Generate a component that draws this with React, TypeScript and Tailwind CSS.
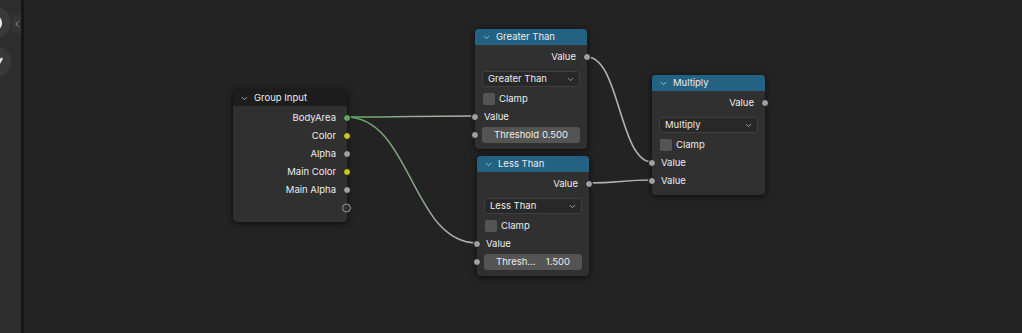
import { ChevronDown, ChevronLeft } from "lucide-react";

type Row =
  | { kind: "out"; label: string; color?: string }
  | { kind: "in"; label: string; color?: string }
  | { kind: "outEmpty" }
  | { kind: "select"; label: string }
  | { kind: "check"; label: string }
  | { kind: "field"; label: string; value: string };

interface NodeProps {
  title: string;
  x: number;
  y: number;
  w: number;
  blue?: boolean;
  rows: Row[];
}

const FONT = { fontFamily: "Inter, 'DejaVu Sans', sans-serif" };

function Socket({ color = "#a1a1a1", side }: { color?: string; side: "l" | "r" }) {
  return (
    <span
      className={`absolute top-1/2 h-[8px] w-[8px] -translate-y-1/2 rounded-full border border-[#1a1a1a] ${
        side === "l" ? "-left-[4px]" : "-right-[4px]"
      }`}
      style={{ backgroundColor: color }}
    />
  );
}

function NodeRow({ row }: { row: Row }) {
  switch (row.kind) {
    case "out":
      return (
        <div className="relative flex h-[18px] items-center justify-end pr-[11px]">
          {row.label}
          <Socket side="r" color={row.color} />
        </div>
      );
    case "outEmpty":
      return (
        <div className="relative h-[18px]">
          <span className="absolute -right-[4px] top-1/2 h-[9px] w-[9px] -translate-y-1/2 rounded-full border border-[#9a9a9a] bg-[#303030]" />
        </div>
      );
    case "in":
      return (
        <div className="relative flex h-[18px] items-center pl-[9px]">
          {row.label}
          <Socket side="l" color={row.color} />
        </div>
      );
    case "select":
      return (
        <div className="mx-[7px] mb-[3px] mt-[5px] flex h-[16px] items-center justify-between rounded-[3px] border border-[#3f3f3f] bg-[#282828] pl-[5px] pr-[4px]">
          <span>{row.label}</span>
          <ChevronDown size={9} strokeWidth={2} className="text-[#bdbdbd]" />
        </div>
      );
    case "check":
      return (
        <div className="flex h-[18px] items-center gap-[4px] pl-[8px]">
          <span className="h-[12px] w-[12px] rounded-[2px] bg-[#545454]" />
          {row.label}
        </div>
      );
    case "field":
      return (
        <div className="relative flex h-[18px] items-center px-[7px]">
          <Socket side="l" />
          <div className="flex h-[16px] flex-1 items-center justify-between rounded-[3px] bg-[#545454] px-[12px]">
            <span>{row.label}</span>
            <span>{row.value}</span>
          </div>
        </div>
      );
  }
}

function Node({ title, x, y, w, blue, rows }: NodeProps) {
  return (
    <div
      className="absolute rounded-[4px] bg-[#303030] pb-[5px] text-[9.5px] text-[#ececec] shadow-[0_1px_6px_rgba(0,0,0,0.7)]"
      style={{ left: x, top: y, width: w }}
    >
      <div
        className={`flex h-[16px] items-center gap-[5px] rounded-t-[4px] pl-[7px] ${
          blue ? "bg-[#246283]" : "bg-[#1d1d1d]"
        }`}
      >
        <ChevronDown size={9} strokeWidth={2} className="text-[#d0d0d0]" />
        <span>{title}</span>
      </div>
      <div className="pt-[3px]">
        {rows.map((r, i) => (
          <NodeRow key={i} row={r} />
        ))}
      </div>
    </div>
  );
}

function link(x1: number, y1: number, x2: number, y2: number) {
  const d = Math.max(Math.abs(x2 - x1) * 0.5, 20);
  return `M${x1} ${y1} C${x1 + d} ${y1} ${x2 - d} ${y2} ${x2} ${y2}`;
}

function ToolButton({ children }: { children: React.ReactNode }) {
  return (
    <div className="-ml-[20px] flex h-[31px] w-[31px] shrink-0 items-center justify-end rounded-full bg-[#393939] pr-[6px]">
      {children}
    </div>
  );
}

export default function App() {
  return (
    <div className="flex h-[333px] w-[1022px] overflow-hidden bg-[#232323]" style={FONT}>
      {/* Toolbar strip */}
      <div className="relative flex w-[21px] shrink-0 flex-col gap-[8px] overflow-hidden bg-[#2d2d2d] pt-[7px]">
        <ToolButton>
          <svg width="14" height="16" viewBox="0 0 14 16">
            <path d="M3 2 h2 a5 6 0 0 1 0 12 h-2 Z" fill="none" stroke="#e6e6e6" strokeWidth="2.2" />
          </svg>
        </ToolButton>
        <ToolButton>
          <svg width="14" height="16" viewBox="0 0 14 16">
            <path d="M1 4 L6 13 L11 4" fill="none" stroke="#e6e6e6" strokeWidth="2.4" strokeLinejoin="round" />
          </svg>
        </ToolButton>
        <div className="absolute left-[12px] top-[15px] flex h-[18px] w-[10px] items-center justify-center rounded-l-[3px] bg-[#353535]">
          <ChevronLeft size={10} strokeWidth={2} className="text-[#a8a8a8]" />
        </div>
      </div>
      <div className="w-[3px] shrink-0 bg-[#161616]" />

      {/* Node canvas */}
      <div className="relative flex-1">
        <svg className="absolute inset-0" width="998" height="333" viewBox="24 0 998 333">
          <defs>
            <linearGradient id="g1" gradientUnits="userSpaceOnUse" x1="346" y1="0" x2="475" y2="0">
              <stop offset="0" stopColor="#66a466" />
              <stop offset="1" stopColor="#b3b3b3" />
            </linearGradient>
            <linearGradient id="g2" gradientUnits="userSpaceOnUse" x1="346" y1="117" x2="477" y2="243">
              <stop offset="0" stopColor="#66a466" />
              <stop offset="0.45" stopColor="#7fa47f" />
              <stop offset="1" stopColor="#b3b3b3" />
            </linearGradient>
          </defs>
          <g fill="none" strokeWidth="1.6" strokeLinecap="round">
            <path d={link(346, 117, 475, 116)} stroke="url(#g1)" />
            <path d={link(346, 117, 477, 243)} stroke="url(#g2)" />
            <path d={link(587, 57, 652, 162)} stroke="#b3b3b3" />
            <path d={link(589, 183, 652, 180)} stroke="#b3b3b3" />
          </g>
        </svg>

        <Node
          title="Group Input"
          x={209}
          y={90}
          w={114}
          rows={[
            { kind: "out", label: "BodyArea", color: "#63a663" },
            { kind: "out", label: "Color", color: "#c7c729" },
            { kind: "out", label: "Alpha" },
            { kind: "out", label: "Main Color", color: "#c7c729" },
            { kind: "out", label: "Main Alpha" },
            { kind: "outEmpty" },
          ]}
        />
        <Node
          title="Greater Than"
          x={451}
          y={29}
          w={112}
          blue
          rows={[
            { kind: "out", label: "Value" },
            { kind: "select", label: "Greater Than" },
            { kind: "check", label: "Clamp" },
            { kind: "in", label: "Value" },
            { kind: "field", label: "Threshold", value: "0.500" },
          ]}
        />
        <Node
          title="Less Than"
          x={453}
          y={156}
          w={112}
          blue
          rows={[
            { kind: "out", label: "Value" },
            { kind: "select", label: "Less Than" },
            { kind: "check", label: "Clamp" },
            { kind: "in", label: "Value" },
            { kind: "field", label: "Thresh...", value: "1.500" },
          ]}
        />
        <Node
          title="Multiply"
          x={628}
          y={75}
          w={113}
          blue
          rows={[
            { kind: "out", label: "Value" },
            { kind: "select", label: "Multiply" },
            { kind: "check", label: "Clamp" },
            { kind: "in", label: "Value" },
            { kind: "in", label: "Value" },
          ]}
        />
      </div>
    </div>
  );
}
